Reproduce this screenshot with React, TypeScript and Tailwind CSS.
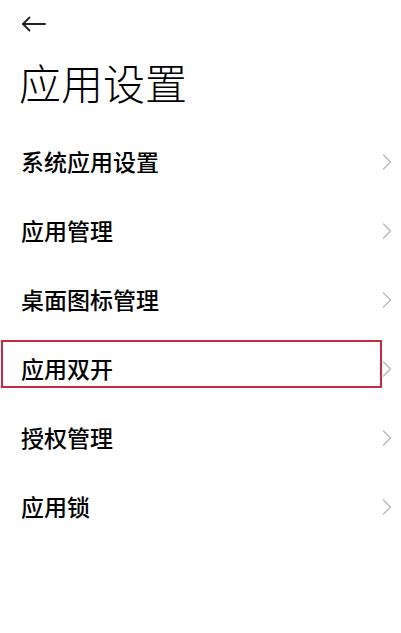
const items = ["系统应用设置", "应用管理", "桌面图标管理", "应用双开", "授权管理", "应用锁"];

const App = () => {
  return (
    <div
      className="w-[401px] h-[633px] bg-white overflow-hidden text-black"
      style={{ fontFamily: '"Noto Sans CJK SC", "Noto Sans", sans-serif' }}
    >
      {/* HEADER */}
      <div className="h-[48px] pl-[21px] flex items-center">
        <svg width="26" height="16" viewBox="0 0 26 16" fill="none" stroke="#222" strokeWidth="1.8" strokeLinecap="round" strokeLinejoin="round">
          <path d="M2 8h22" />
          <path d="M8.5 1.5 2 8l6.5 6.5" />
        </svg>
      </div>
      <h1 className="pl-[19px] mt-[7px] text-[42px] leading-[54px] font-light">应用设置</h1>

      {/* LIST */}
      <div className="mt-[18px]">
        {items.map((label) => (
          <div key={label} className="relative h-[69px] flex items-center justify-between pl-[21px] pr-[9px]">
            <span className="text-[23px] font-medium leading-none">{label}</span>
            <svg width="10" height="16" viewBox="0 0 10 16" fill="none" stroke="#b8b8b8" strokeWidth="1.4" strokeLinecap="round" strokeLinejoin="round">
              <path d="M1.5 1 8.5 8l-7 7" />
            </svg>
            {label === "应用双开" && (
              <div className="absolute left-[1px] top-[6px] w-[381px] h-[48px] border-2 border-[#c72a3c]" />
            )}
          </div>
        ))}
      </div>
    </div>
  );
};

export default App;
